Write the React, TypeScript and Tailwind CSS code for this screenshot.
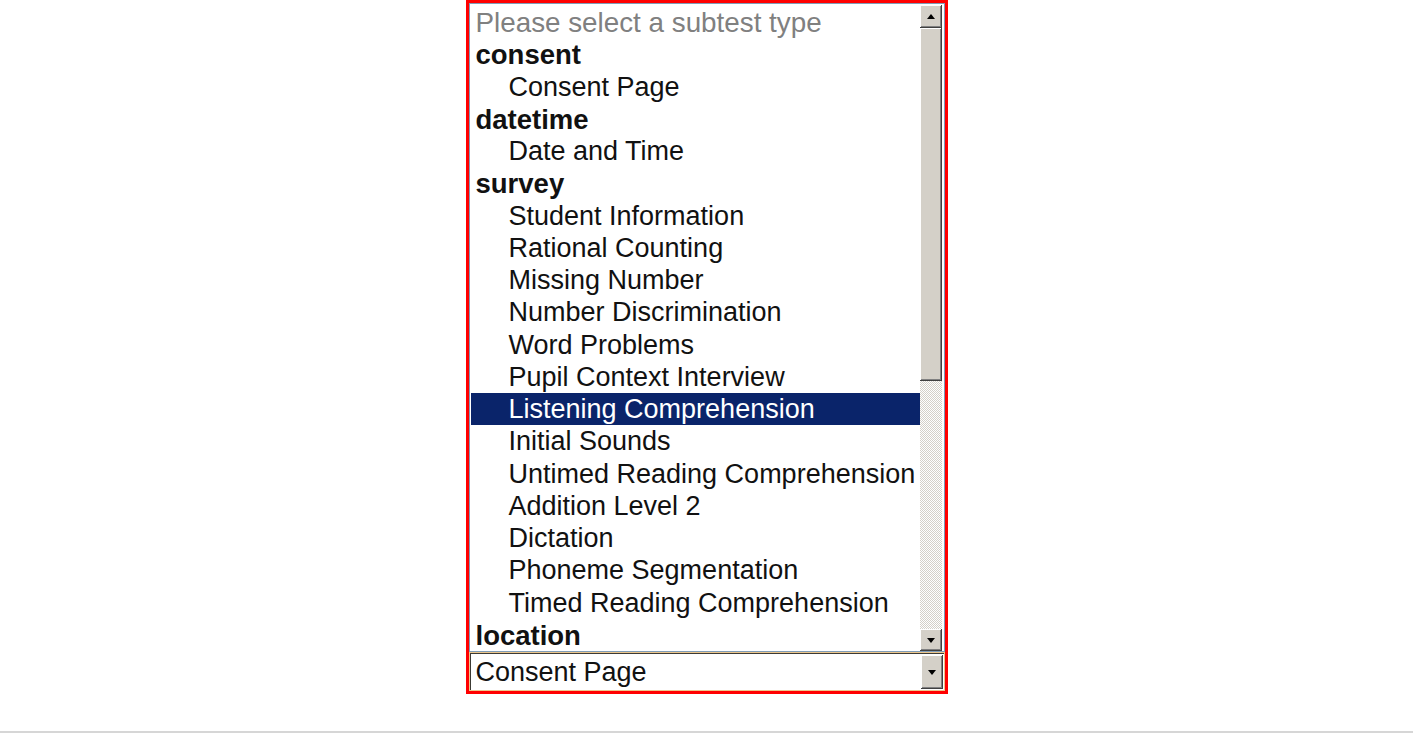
import React from 'react';

type Row = { label: string; kind: 'placeholder' | 'group' | 'option'; selected?: boolean };

const rows: Row[] = [
  { label: 'Please select a subtest type', kind: 'placeholder' },
  { label: 'consent', kind: 'group' },
  { label: 'Consent Page', kind: 'option' },
  { label: 'datetime', kind: 'group' },
  { label: 'Date and Time', kind: 'option' },
  { label: 'survey', kind: 'group' },
  { label: 'Student Information', kind: 'option' },
  { label: 'Rational Counting', kind: 'option' },
  { label: 'Missing Number', kind: 'option' },
  { label: 'Number Discrimination', kind: 'option' },
  { label: 'Word Problems', kind: 'option' },
  { label: 'Pupil Context Interview', kind: 'option' },
  { label: 'Listening Comprehension', kind: 'option', selected: true },
  { label: 'Initial Sounds', kind: 'option' },
  { label: 'Untimed Reading Comprehension', kind: 'option' },
  { label: 'Addition Level 2', kind: 'option' },
  { label: 'Dictation', kind: 'option' },
  { label: 'Phoneme Segmentation', kind: 'option' },
  { label: 'Timed Reading Comprehension', kind: 'option' },
  { label: 'location', kind: 'group' },
];

// classic win 3d button look
const bevel =
  'bg-[#d4d0c8] shadow-[inset_-1px_-1px_#404040,inset_1px_1px_#ffffff,inset_-2px_-2px_#808080]';

function Arrow({ up }: { up?: boolean }) {
  return (
    <svg width="8" height="5" viewBox="0 0 8 5">
      <polygon points={up ? '0,5 8,5 4,0' : '0,0 8,0 4,5'} fill="#000" />
    </svg>
  );
}

function Scrollbar() {
  return (
    <div className="mr-[2px] flex w-[22px] shrink-0 flex-col pt-[1px]">
      <div className={`${bevel} flex h-[23px] items-center justify-center`}>
        <Arrow up />
      </div>
      <div className={`${bevel} h-[353px]`} />
      <div className="flex-1 bg-[#ecebe6] bg-[image:repeating-conic-gradient(#d4d0c8_0%_25%,#ffffff_0%_50%)] bg-[length:2px_2px]" />
      <div className={`${bevel} flex h-[22px] items-center justify-center`}>
        <Arrow />
      </div>
    </div>
  );
}

export default function App() {
  return (
    <div className="flex h-[733px] w-full flex-col bg-white font-['Liberation_Sans',Arial,sans-serif]">
      <div className="flex flex-1 justify-center">
        <div className="flex h-[694px] w-[482px] flex-col border-[3px] border-[#ff0000]">
          <div className="flex h-[649px] border border-[#7f9db9] bg-white">
            <ul className="flex-1 overflow-hidden pt-[2px] pl-[1px]">
              {rows.map((r) => (
                <li
                  key={r.label}
                  className={[
                    'h-[32.25px] whitespace-nowrap pt-[1px] leading-[31.25px]',
                    r.kind === 'option' ? 'pl-[38px] text-[27px]' : 'pl-[5px]',
                    r.kind === 'group' ? 'text-[27.5px] font-bold text-[#111]' : '',
                    r.kind === 'placeholder' ? 'text-[27.8px] text-[#808080]' : '',
                    r.kind === 'option' && !r.selected ? 'text-[#111]' : '',
                    r.selected ? 'bg-[#0a246a] text-white' : '',
                  ].join(' ')}
                >
                  {r.label}
                </li>
              ))}
            </ul>
            <Scrollbar />
          </div>
          <div className="flex flex-1 border border-[#ecc68c]">
            <div className="flex flex-1 border-t border-l border-[#3c3a34] bg-white">
              <div className="flex-1 pl-[5px] text-[27px] leading-[36px] text-[#111]">Consent Page</div>
              <div className={`${bevel} mr-[1px] my-[1px] flex w-[22px] items-center justify-center`}>
                <Arrow />
              </div>
            </div>
          </div>
        </div>
      </div>
      <div className="h-[2px] bg-[#d6d6d6]" />
    </div>
  );
}
